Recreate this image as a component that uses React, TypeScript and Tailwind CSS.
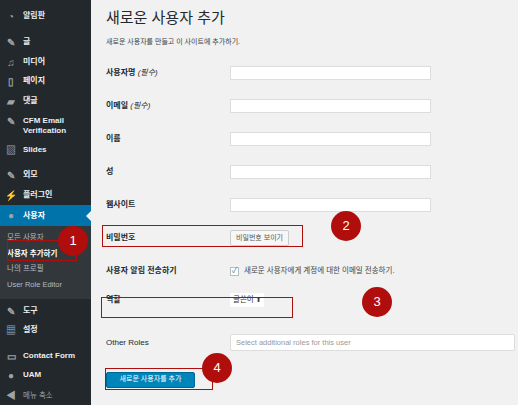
const F = { fontFamily: '"Liberation Sans","Noto Sans CJK KR",sans-serif' };

function Icon({ k }: { k: string }) {
  return <span className="w-[12px] h-[10px] mr-[6px] inline-flex items-center justify-center text-[#9ea3a8] text-[10px]">{k}</span>;
}

function Item({ icon, label, cls = "" }: { icon: string; label: React.ReactNode; cls?: string }) {
  return (
    <div className={`flex items-start px-[5px] text-[8px] font-bold text-[#eee] ${cls}`}>
      <Icon k={icon} />
      <span className="leading-[10px]">{label}</span>
    </div>
  );
}

function Row({ label, children, h = 33 }: { label: React.ReactNode; children?: React.ReactNode; h?: number }) {
  return (
    <div className="flex items-center" style={{ height: h }}>
      <div className="w-[124px] text-[8px] font-bold text-[#23282d]">{label}</div>
      {children}
    </div>
  );
}

const Input = () => <div className="w-[201px] h-[14px] bg-white border border-[#ddd]" />;

function Circle({ n, x, y }: { n: number; x: number; y: number }) {
  return (
    <div className="absolute w-[30px] h-[30px] rounded-full bg-[#b00d0d] text-white text-[13px] flex items-center justify-center" style={{ left: x - 15, top: y - 15 }}>{n}</div>
  );
}
function Box({ x, y, w, h }: { x: number; y: number; w: number; h: number }) {
  return <div className="absolute border-[1.5px] border-[#b00d0d]" style={{ left: x, top: y, width: w, height: h }} />;
}

export default function App() {
  return (
    <div className="relative w-[518px] h-[405px] flex bg-[#f1f1f1] overflow-hidden" style={F}>
      <div className="w-[91px] bg-[#23282d] flex flex-col pt-[11px]">
        <Item icon="◔" label="알림판" />
        <div className="h-[16px]" />
        <Item icon="✎" label="글" />
        <Item icon="♫" label="미디어" cls="mt-[10px]" />
        <Item icon="▯" label="페이지" cls="mt-[9px]" />
        <Item icon="▰" label="댓글" cls="mt-[10px]" />
        <Item icon="✎" label={<>CFM Email<br />Verification</>} cls="mt-[10px]" />
        <Item icon="▧" label="Slides" cls="mt-[9px]" />
        <Item icon="✎" label="외모" cls="mt-[15px]" />
        <Item icon="⚡" label="플러그인" cls="mt-[10px]" />
        <div className="mt-[5px] h-[21px] bg-[#0073aa] flex items-center relative">
          <Item icon="●" label="사용자" cls="text-white" />
          <div className="absolute right-0 top-[6px] w-0 h-0 border-y-[5px] border-y-transparent border-r-[5px] border-r-[#f1f1f1]" />
        </div>
        <div className="bg-[#32373c] pt-[4px] pb-[7px] px-[7px] text-[7.5px] text-[#b4b9be] leading-[15.5px]">
          <div>모든 사용자</div>
          <div className="text-white font-bold">사용자 추가하기</div>
          <div>나의 프로필</div>
          <div>User Role Editor</div>
        </div>
        <Item icon="✎" label="도구" cls="mt-[7px]" />
        <Item icon="▦" label="설정" cls="mt-[9px]" />
        <Item icon="▭" label="Contact Form" cls="mt-[16px]" />
        <Item icon="●" label="UAM" cls="mt-[9px]" />
        <div className="flex items-center px-[5px] mt-[10px] text-[7.5px] text-[#9ea3a8]"><Icon k="◀" />메뉴 축소</div>
      </div>
      <div className="flex-1 pl-[15px] pt-[9px]">
        <div className="text-[15px] text-[#23282d] leading-[18px]">새로운 사용자 추가</div>
        <div className="text-[7px] text-[#444] mt-[10px]">새로운 사용자를 만들고 이 사이트에 추가하기.</div>
        <div className="mt-[9px]">
          <Row label={<>사용자명 <i className="font-normal">(필수)</i></>}><Input /></Row>
          <Row label={<>이메일 <i className="font-normal">(필수)</i></>}><Input /></Row>
          <Row label="이름"><Input /></Row>
          <Row label="성"><Input /></Row>
          <Row label="웹사이트"><Input /></Row>
          <Row label="비밀번호"><div className="h-[16px] px-[5px] bg-[#f7f7f7] border border-[#ccc] rounded-[2px] text-[7px] text-[#555] flex items-center">비밀번호 보이기</div></Row>
          <Row label="사용자 알림 전송하기"><div className="flex items-center text-[7.5px] text-[#444]"><div className="w-[9px] h-[9px] bg-white border border-[#bbb] text-[#1e8cbe] text-[8px] leading-[8px] flex items-center justify-center mr-[5px]">✓</div>새로운 사용자에게 계정에 대한 이메일 전송하기.</div></Row>
          <Row label={<span className="relative top-[-4px]">역할</span>}><div className="h-[14px] px-[3px] bg-white text-[7.5px] text-[#333] flex items-center relative top-[-4px]">글쓴이 <span className="text-[6px] ml-[2px]">⬍</span></div></Row>
          <Row label={<span className="font-normal">Other Roles</span>} h={44}><div className="w-[285px] h-[17px] bg-white border border-[#ddd] rounded-[2px] text-[7.5px] text-[#999] flex items-center px-[5px]">Select additional roles for this user</div></Row>
          <div className="mt-[7px] w-[89px] h-[16px] bg-[#0085ba] border border-[#006799] rounded-[2px] text-white text-[7px] flex items-center justify-center">새로운 사용자를 추가</div>
        </div>
      </div>
      <Box x={7} y={240} w={70} h={21} />
      <Box x={102} y={225} w={201} h={22} />
      <Box x={101} y={297} w={192} h={21} />
      <Box x={105} y={368} w={108} h={22} />
      <Circle n={1} x={73} y={241} />
      <Circle n={2} x={346} y={226} />
      <Circle n={3} x={377} y={302} />
      <Circle n={4} x={217} y={368} />
    </div>
  );
}
